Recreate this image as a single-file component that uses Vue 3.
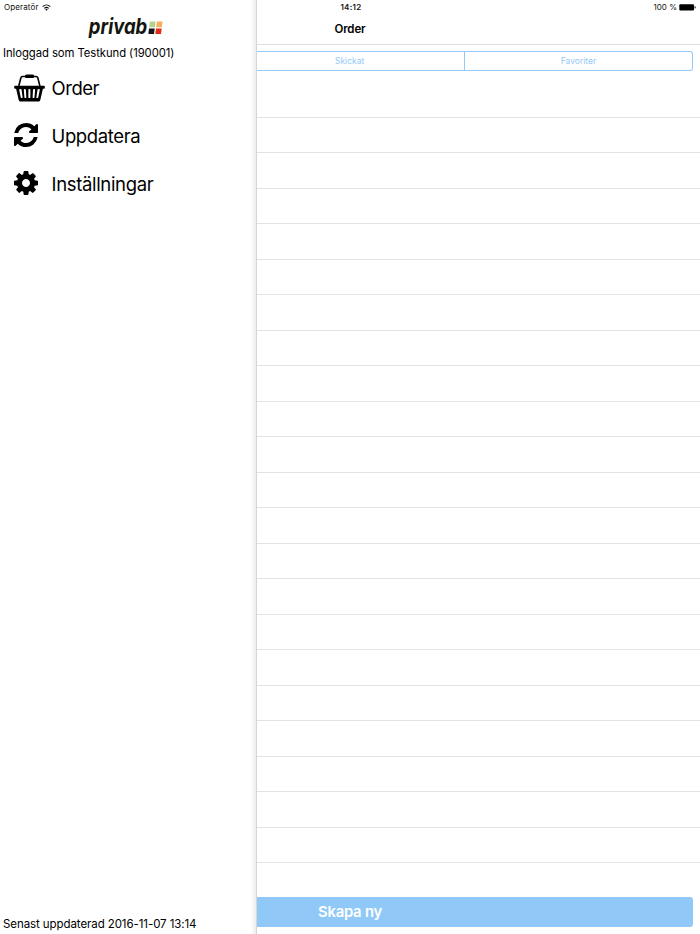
<script setup>
const rows = Array.from({ length: 22 }, (_, i) => i)
</script>

<template>
  <div class="screen">
    <header class="status">
      <span class="carrier">Operatör
        <svg class="wifi" viewBox="0 0 16 12"><g fill="none" stroke="#111" stroke-width="1.8"><path d="M1.2 4.4a10 10 0 0 1 13.6 0" /><path d="M4 7.6a6 6 0 0 1 8 0" /></g><path d="M5.8 9.4a3.2 3.2 0 0 1 4.4 0L8 11.8z" fill="#111" /></svg>
      </span>
      <span class="clock">14:12</span>
      <span class="power">100 %
        <svg class="battery" viewBox="0 0 17 7"><rect x="0.3" y="0.2" width="14.7" height="6.3" rx="1" /><path d="M15.6 2.1q1.1.3 1.1 1.3t-1.1 1.3z" /></svg>
      </span>
    </header>
    <aside class="menu">
      <svg class="logo" viewBox="0 0 76 24">
        <text x="1.8" y="18.8" textLength="58.5" lengthAdjust="spacingAndGlyphs">privab</text>
        <path d="M62.900 6.500h5.700l-.7 5.700h-5.700z" fill="#b9d08b" />
        <path d="M69.900 6.500h5.700l-.7 5.700h-5.700z" fill="#f6ae60" />
        <path d="M62 13.400h5.700l-.7 5.700h-5.700z" fill="#151515" />
        <path d="M69 13.400h5.700l-.7 5.700h-5.700z" fill="#e3281c" />
      </svg>
      <p class="user">Inloggad som Testkund (190001)</p>
      <nav>
        <a class="item">
          <svg class="basket" viewBox="0 0 31 28">
            <path d="M4.800 12L6.900 3.800Q7.200 2.500 8.400 2.500H22.200Q23.400 2.500 23.800 3.800L25.900 12" fill="none" stroke="#000" stroke-width="1.6" />
            <rect x="11" y="0.4" width="9.200" height="3.600" rx="1.500" />
            <path fill-rule="evenodd" d="M1 11.700H30q.8 0 .8.9v1.200q0 .9-.8.9h-1.100L26.300 26q-.4 1.500-1.800 1.500H6.500Q5.100 27.500 4.700 26L2.100 14.700H1q-.8 0-.8-.9v-1.200q0-.9.8-.9zM5.200 15.800l1.500 7.400q.2.900 1.100.9t.8-.9L7.600 15.800q-.1-.9-1.200-.9t-1.200.9zM9.800 15.800l.6 7.400q.1.900 1 .9t.9-.9l-.4-7.400q-.1-.9-1.100-.9t-1 .9zM14.400 15.800v7.400q0 .9 1 .9t1-.9v-7.400q0-.9-1-.9t-1 .9zM19 15.800l-.4 7.400q0 .9.900.9t1-.9l.6-7.400q0-.9-1-.9t-1.100.9zM23.500 15.800l-1.100 7.400q-.1.900.8.9t1.100-.9l1.500-7.400q.1-.9-1.100-.9t-1.200.9z" />
          </svg>
          <span class="l1">Order</span>
        </a>
        <a class="item">
          <svg class="glyph" viewBox="128 128 1536 1536"><path d="M1639 1056q0 5-1 7-64 268-268 434.500t-478 166.500q-146 0-282.500-55t-243.500-157l-129 129q-19 19-45 19t-45-19-19-45v-448q0-26 19-45t45-19h448q26 0 45 19t19 45-19 45l-137 137q71 66 161 102t187 36q134 0 250-65t186-179q11-17 53-117 8-23 30-23h192q13 0 22.500 9.500t9.500 22.500zm25-800v448q0 26-19 45t-45 19h-448q-26 0-45-19t-19-45 19-45l138-138q-148-137-349-137-134 0-250 65t-186 179q-11 17-53 117-8 23-30 23h-199q-13 0-22.500-9.500t-9.500-22.500v-7q65-268 270-434.500t480-166.500q146 0 284 55.500t245 156.500l130-129q19-19 45-19t45 19 19 45z" /></svg>
          <span class="l2">Uppdatera</span>
        </a>
        <a class="item">
          <svg class="glyph" viewBox="128 128 1536 1536"><path d="M1152 896q0-106-75-181t-181-75-181 75-75 181 75 181 181 75 181-75 75-181zm512-109v222q0 12-8 23t-20 13l-185 28q-19 54-39 91 35 50 107 138 10 12 10 25t-9 23q-27 37-99 108t-94 71q-12 0-26-9l-138-108q-44 23-91 38-16 136-29 186-7 28-36 28h-222q-14 0-24.500-8.500t-11.500-21.500l-28-184q-49-16-90-37l-141 107q-10 9-25 9-14 0-25-11-126-114-165-168-7-10-7-23 0-12 8-23 15-21 51-66.500t54-70.500q-27-50-41-99l-183-27q-13-2-21-12.500t-8-23.500v-222q0-12 8-23t19-13l186-28q14-46 39-92-40-57-107-138-10-12-10-24 0-10 9-23 26-36 98.500-107.500t94.500-71.500q13 0 26 10l138 107q44-23 91-38 16-136 29-186 7-28 36-28h222q14 0 24.500 8.500t11.500 21.500l28 184q49 16 90 37l142-107q9-9 24-9 13 0 25 10 129 119 165 170 7 8 7 22 0 12-8 23-15 21-51 66.500t-54 70.500q26 50 41 98l183 28q13 2 21 12.500t8 23.500z" /></svg>
          <span class="l3">Inställningar</span>
        </a>
      </nav>
      <p class="updated">Senast uppdaterad 2016-11-07 13:14</p>
    </aside>
    <main class="content">
      <h1><span>Order</span></h1>
      <div class="tabs">
        <div class="tab first"><span>Skickat</span></div>
        <div class="tab"><span>Favoriter</span></div>
      </div>
      <div class="list">
        <div v-for="r in rows" :key="r" class="row"></div>
      </div>
      <button class="create"><span>Skapa ny</span></button>
    </main>
  </div>
</template>

<style>
body { margin: 0; background: #fff; }
</style>

<style scoped>
* { box-sizing: border-box; }
.screen { position: relative; display: flex; width: 700px; height: 934px; overflow: hidden; background: #fff; color: #000; font-family: Inter, "Liberation Sans", sans-serif; }
.status { position: absolute; z-index: 2; top: 0; left: 0; width: 700px; height: 15px; padding: 0 4px; display: grid; grid-template-columns: 1fr auto 1fr; align-items: center; font-size: 8px; line-height: 15px; color: #111; }
.carrier, .power { display: flex; align-items: center; gap: 3px; letter-spacing: 0.13px; }
.power { justify-content: flex-end; gap: 2px; letter-spacing: 0; }
.clock { padding-left: 2px; font-weight: 600; letter-spacing: 0.3px; }
.wifi { width: 9px; height: 7px; }
.battery { width: 17px; height: 7px; }
.menu { display: flex; flex-direction: column; width: 257px; height: 934px; padding-top: 15px; background: linear-gradient(to right, #fff 251px, #f6f6f6 253px, #eee 255.500px, #d6d6d6 256px); }
.logo { width: 76px; height: 24px; margin-left: 87px; flex: none; overflow: visible; }
.logo text { font: italic 700 21px Inter, sans-serif; fill: #151510; }
p { margin: 0; font-size: 11.300px; line-height: 16px; white-space: nowrap; }
.user { margin: 6px 0 0 3px; letter-spacing: -0.070px; }
nav { margin-top: 3px; }
.item { display: flex; align-items: center; height: 48px; padding-left: 14px; font-size: 18.500px; }
.item span { line-height: 24px; padding-bottom: 1px; }
.basket { width: 31px; height: 28px; margin-right: 6.500px; flex: none; }
.glyph { width: 24px; height: 24px; margin: 0 13.500px 2px 0; flex: none; }
.l1 { letter-spacing: -0.450px; }
.l2 { letter-spacing: -0.370px; }
.l3 { letter-spacing: -0.330px; }
.updated { margin: auto 0 2px 3px; font-size: 11.500px; letter-spacing: -0.080px; }
.content { display: flex; flex-direction: column; width: 443px; height: 934px; padding-top: 15px; background: #fff; }
h1 { margin: 0; height: 30px; padding-left: 77.500px; border-bottom: 1px solid #dedede; font-size: 11.500px; font-weight: 600; line-height: 29px; letter-spacing: -0.150px; }
.tabs { display: flex; flex: none; height: 20px; width: 436px; margin-top: 6px; border: 1px solid #93c8f8; border-left: 0; border-radius: 0 3px 3px 0; color: #93c8f8; font-size: 8.500px; line-height: 19px; }
.tab { flex: 1; text-align: center; }
.first { flex: 0 0 208px; padding-left: 78px; text-align: left; border-right: 1px solid #93c8f8; }
.list { margin-top: 11px; flex: 1; }
.row { height: 35.520px; border-bottom: 1px solid #e3e3e3; }
.create { flex: none; width: 436px; height: 30px; margin: 0 0 7px; padding: 0 0 0 61px; border: 0; border-radius: 0 3px 3px 0; background: #90c9f8; color: #fff; font: 600 14.800px/30px Inter, sans-serif; letter-spacing: -0.200px; text-align: left; }
</style>
